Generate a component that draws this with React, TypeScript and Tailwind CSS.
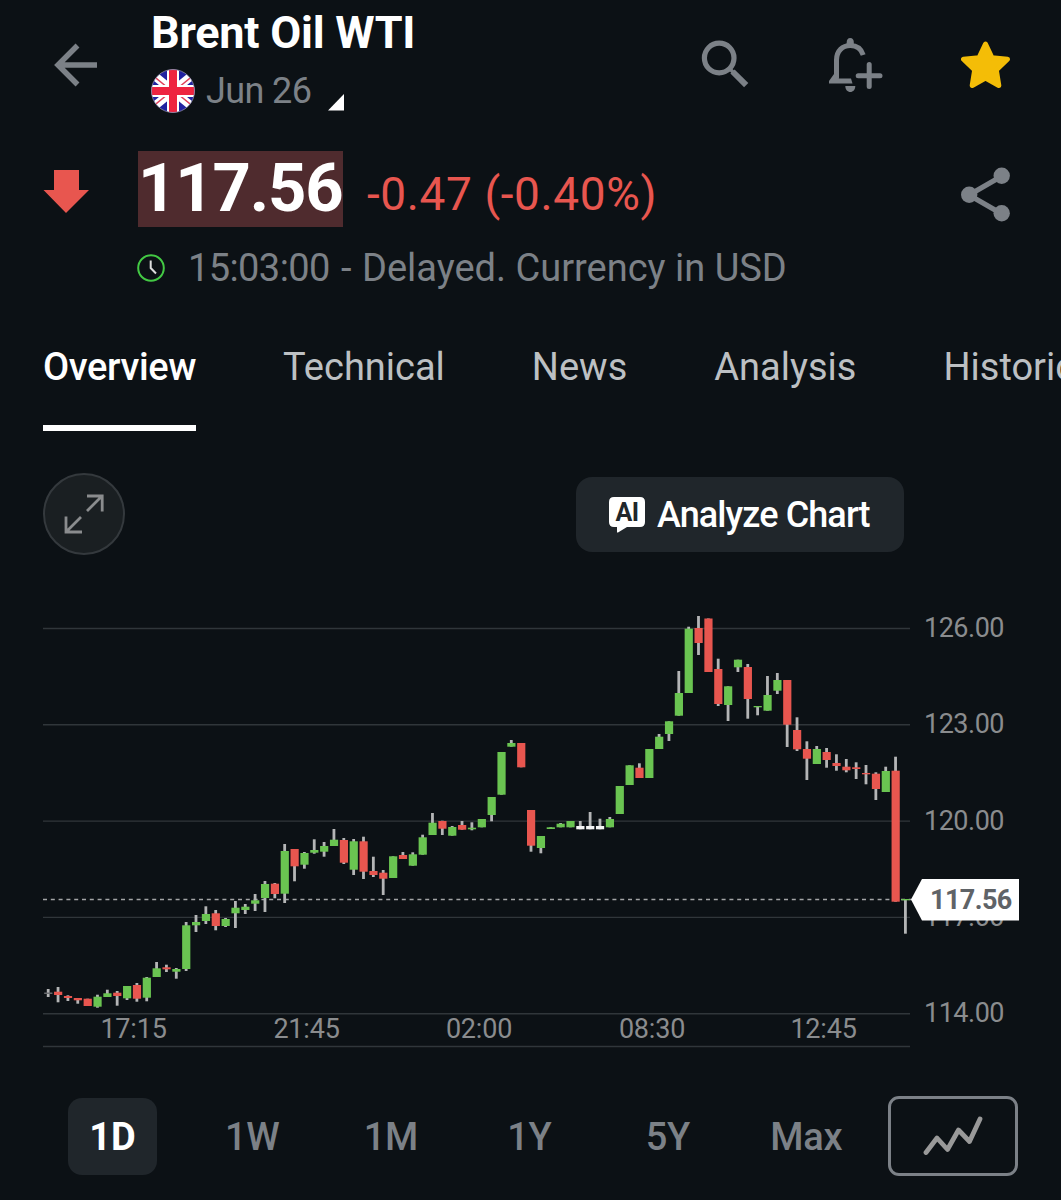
import React from "react";

type Tone = "g" | "r" | "w" | "n";

// [high, bodyTop, bodyBottom, low, tone] in chart units
type Candle = [number, number, number, number, Tone];

const TONES: Record<Tone, string> = {
  g: "#6ac451",
  r: "#e8564f",
  w: "#f4f4f4",
  n: "#6a6d70",
};

const CANDLES: Candle[] = [
  [389, 392.5, 394, 397, "n"],
  [387, 391.7, 395, 402.3, "r"],
  [395.3, 396, 398, 401, "r"],
  [398, 398, 400.3, 403.7, "r"],
  [398.7, 398.7, 406, 406, "r"],
  [394.7, 396.7, 406.7, 407.7, "g"],
  [389.7, 393.3, 397, 397, "g"],
  [391, 392.7, 396, 405.7, "r"],
  [386, 386, 398.3, 400, "g"],
  [383, 385, 398.7, 401.7, "r"],
  [377, 377.7, 397.7, 401.3, "g"],
  [362, 368.3, 377, 377, "g"],
  [364.7, 367.3, 369.3, 372, "r"],
  [368, 369, 371.7, 378.7, "g"],
  [322, 325.3, 369, 371, "g"],
  [315, 322, 325.3, 332, "g"],
  [306.3, 314, 321, 324, "g"],
  [310, 313.3, 326, 330.3, "r"],
  [318, 319, 326, 327, "g"],
  [301, 307.7, 313.3, 328, "g"],
  [304, 306.7, 310, 314, "g"],
  [294, 300.3, 303.7, 311, "g"],
  [281, 284, 298, 312, "g"],
  [283, 283.7, 294, 298.3, "r"],
  [244, 251, 293.7, 303, "g"],
  [249, 249, 266.3, 281.3, "r"],
  [252, 253, 264.7, 268.7, "g"],
  [239.3, 250, 252.7, 253.7, "g"],
  [242, 246, 251.7, 256.7, "g"],
  [229, 239.7, 246, 246, "g"],
  [238, 240, 262.7, 264, "r"],
  [239, 241.3, 269.7, 275, "g"],
  [236.7, 241.3, 271.7, 279, "r"],
  [256.7, 271, 275, 277, "r"],
  [270, 272.7, 278.7, 295, "r"],
  [256.3, 256.3, 278, 278, "g"],
  [252, 255, 259, 259, "r"],
  [252.3, 254.3, 265.7, 265.7, "g"],
  [234.7, 237.3, 254.7, 254.7, "g"],
  [213, 222.7, 235, 235, "g"],
  [220.7, 221, 228.7, 235, "r"],
  [226, 227, 235.7, 235.7, "g"],
  [221, 225, 229.7, 229.7, "r"],
  [222.3, 227.7, 229.3, 230.3, "g"],
  [219, 219, 227.3, 227.3, "g"],
  [197, 197, 215, 221.3, "g"],
  [152, 152, 194.7, 194.7, "g"],
  [140, 143, 146.7, 146.7, "g"],
  [143, 143, 167.3, 167.3, "r"],
  [210, 210, 245.7, 251.7, "r"],
  [236, 236, 248, 253.3, "g"],
  [227.3, 227.3, 229, 229, "g"],
  [223, 223.7, 227.3, 227.3, "g"],
  [221, 221, 227.3, 227.3, "g"],
  [221, 226, 229.3, 229.3, "w"],
  [212, 226, 229.3, 229.3, "w"],
  [218.7, 226, 229.3, 229.3, "w"],
  [217, 219, 227.3, 227.3, "g"],
  [186, 186, 214, 214, "g"],
  [165.3, 165.3, 185, 185, "g"],
  [163.3, 167.7, 178, 178, "r"],
  [149, 149, 178, 178, "g"],
  [134, 136.7, 149, 149, "g"],
  [121.3, 121.3, 134, 141, "g"],
  [71, 93, 115.7, 115.7, "g"],
  [26.7, 28.7, 93, 93, "g"],
  [16, 28, 43, 55, "r"],
  [18.5, 18.5, 72, 72, "r"],
  [58.7, 69, 104, 106, "r"],
  [86.3, 86.3, 105, 121, "g"],
  [59.7, 59.7, 67.3, 72, "g"],
  [64, 67, 99, 118.7, "r"],
  [106, 106, 107.3, 115.3, "g"],
  [76, 95, 110.7, 110.7, "g"],
  [73, 80, 90.7, 94, "g"],
  [80, 80, 124.7, 147, "r"],
  [117.3, 130, 149.3, 151, "r"],
  [141.3, 149, 158.7, 180, "r"],
  [146, 149, 164, 164, "g"],
  [148, 152, 160, 167.7, "r"],
  [154.3, 163, 166, 170.7, "r"],
  [159, 166.7, 170.3, 172.3, "r"],
  [162.3, 167.3, 169, 179, "r"],
  [165, 173, 174.3, 184.3, "r"],
  [172.3, 173.7, 189, 200, "r"],
  [166.7, 171, 192, 192, "g"],
  [156.7, 170.7, 301.7, 301.7, "r"],
  [299, 299, 300.3, 333.7, "g"],
];

const GRID = [
  { y: 28.5, label: "126.00" },
  { y: 124.8, label: "123.00" },
  { y: 221.1, label: "120.00" },
  { y: 317.4, label: "117.00" },
  { y: 413.7, label: "114.00" },
];

const TIMES = [
  { x: 133.5, label: "17:15" },
  { x: 306.5, label: "21:45" },
  { x: 479, label: "02:00" },
  { x: 652, label: "08:30" },
  { x: 823.5, label: "12:45" },
];

const TABS = ["Technical", "News", "Analysis", "Historical"];
const RANGES = ["1W", "1M", "1Y", "5Y", "Max"];

const UkFlag = () => (
  <svg width="44" height="44" viewBox="0 0 44 44">
    <defs>
      <clipPath id="flag">
        <circle cx="22" cy="22" r="21.5" />
      </clipPath>
    </defs>
    <g clipPath="url(#flag)">
      <rect width="44" height="44" fill="#2222a0" />
      <path d="M0 4L44 40M44 4L0 40" stroke="#fff" strokeWidth="8.5" />
      <path d="M0 5L22 23M44 39L22 21M44 5L22 23M0 39L22 21" stroke="#e0405a" strokeWidth="1.6" />
      <path d="M22 0V44M0 22H44" stroke="#fff" strokeWidth="12" />
      <path d="M22 0V44M0 22H44" stroke="#ee2440" strokeWidth="8" />
    </g>
    <circle cx="22" cy="22" r="21.5" fill="none" stroke="#8d8ba8" strokeWidth="0.8" />
  </svg>
);

const Header = () => (
  <header className="flex h-[130px] pl-[53px]">
    <svg className="mt-[43px]" width="45" height="44" viewBox="0 0 45 44" fill="none" stroke="#7c8187" strokeWidth="5.5">
      <path d="M44 22H5M24.5 2.5L5 22L24.5 41.5" />
    </svg>
    <div className="ml-[53px] w-[548px]">
      <h1 className="mt-[7px] text-[45px] font-bold leading-[52px] tracking-[-0.25px] whitespace-nowrap text-white">
        Brent Oil WTI
      </h1>
      <div className="mt-[10px] flex h-[44px]">
        <UkFlag />
        <span className="ml-[11px] w-[106px] text-[36px] leading-[45px] tracking-[-0.6px] whitespace-nowrap text-[#7c8187]">
          Jun 26
        </span>
        <svg className="mt-[25px] ml-[16px]" width="17" height="17" viewBox="0 0 17 17">
          <path d="M16 0V16.5H0Z" fill="#fff" />
        </svg>
      </div>
    </div>
    <svg className="mt-[38px]" width="52" height="52" viewBox="0 0 52 52" fill="none" stroke="#7c8187">
      <circle cx="20.2" cy="20" r="14.8" strokeWidth="5.2" />
      <path d="M31 31L34.5 34.5" strokeWidth="3.6" />
      <path d="M33.5 33.5L47.2 47.2" strokeWidth="6" />
    </svg>
    <svg className="mt-[36px] ml-[77px]" width="56" height="58" viewBox="0 0 56 58" fill="none" stroke="#7c8187">
      <path d="M22.2 2C24.6 2 25.8 3.8 25.8 6V8.5H18.7V6C18.7 3.8 19.9 2 22.2 2Z" fill="#7c8187" stroke="none" />
      <path d="M8.5 42.5V24C8.5 15 14.5 9.5 22.3 9.5C29 9.5 33.5 13.5 35.2 19" strokeWidth="5" />
      <path d="M6 38L11 42.5H23L24.5 47.5H1V45Z" fill="#7c8187" stroke="none" />
      <path d="M17.3 50H27.3C27.3 53.8 25 56 22.3 56S17.3 53.8 17.3 50Z" fill="#7c8187" stroke="none" />
      <path d="M41.2 28.5V50.5M30.2 39.7H52" strokeWidth="5" strokeLinecap="round" />
    </svg>
    <svg className="mt-[40px] ml-[77px]" width="50" height="50" viewBox="0 0 50 50">
      <path
        d="M24.5 4L31 17.8L46.5 19.2L35.3 30L37.8 45.5L24.5 38L11.2 45.5L13.7 30L2.5 19.2L18 17.8Z"
        fill="#f4bd07"
        stroke="#f4bd07"
        strokeWidth="5"
        strokeLinejoin="round"
      />
    </svg>
  </header>
);

const Quote = () => (
  <section className="h-[170px] pl-[43px] pt-[21px]">
    <div className="flex h-[76px]">
      <svg className="mt-[19px]" width="46" height="43" viewBox="0 0 46 43">
        <path d="M11 0H36V20H46L23 43L0.5 20H11Z" fill="#e8564f" />
      </svg>
      <div className="ml-[49px] w-[205px] bg-[#4f2b2e] text-[67px] font-bold leading-[75px] tracking-[-1.2px] whitespace-nowrap text-white">
        117.56
      </div>
      <span className="mt-[1px] ml-[24px] w-[593px] text-[46px] leading-[84px] tracking-[0.6px] whitespace-nowrap text-[#e8564f]">
        -0.47 (-0.40%)
      </span>
      <svg className="mt-[15px]" width="52" height="56" viewBox="0 0 52 56" fill="#7c8187">
        <path d="M42 10L9 29L42 48" fill="none" stroke="#7c8187" strokeWidth="5.2" />
        <circle cx="41.7" cy="9.7" r="8.2" />
        <circle cx="9.2" cy="28.7" r="8.2" />
        <circle cx="41.7" cy="47.3" r="8.2" />
      </svg>
    </div>
    <div className="mt-[18px] ml-[94px] flex h-[46px] items-center">
      <svg width="28" height="28" viewBox="0 0 28 28" fill="none">
        <circle cx="14" cy="14" r="12.8" stroke="#43c944" strokeWidth="2" />
        <path d="M13.7 6.5V14L19 19.5" stroke="#ddd" strokeWidth="2" />
      </svg>
      <p className="ml-[23px] flex text-[38px] whitespace-nowrap text-[#7c8187]">
        <span className="w-[153px] tracking-[-0.6px]">15:03:00</span>
        <span className="w-[21px]">-</span>
        <span>Delayed. Currency in USD</span>
      </p>
    </div>
  </section>
);

const Tabs = () => (
  <nav className="ml-[43px] mt-[35px] flex h-[96px] gap-[87px] text-[38px] leading-[64px] whitespace-nowrap">
    <span className="w-[153px] shrink-0 border-b-[6px] border-white font-medium tracking-[-0.35px] text-white">Overview</span>
    {TABS.map((tab) => (
      <span key={tab} className="text-[#bdc0c3]">
        {tab}
      </span>
    ))}
  </nav>
);

const ChartToolbar = () => (
  <div className="mt-[42px] ml-[43px] flex h-[82px] w-[861px] items-center justify-between">
    <div className="flex h-[82px] w-[82px] items-center justify-center rounded-full border-2 border-[#34393d] bg-[#1a1f22]">
      <svg width="42" height="42" viewBox="0 0 42 42" fill="none" stroke="#8a8c8e" strokeWidth="2.8">
        <path d="M24 18L39 3M24 3H39.2V18.5M18 24L3 39M3 23.5V39H19" />
      </svg>
    </div>
    <button className="mt-px flex h-[75px] w-[328px] items-center rounded-[16px] bg-[#20262b] pl-[33px]">
      <div className="relative h-[36px] w-[36px]">
        <svg width="36" height="36" viewBox="0 0 36 36">
          <path d="M5 0H31Q36 0 36 5V25Q36 30 31 30H18L9 35.5Q8 36 8 34.5V30H5Q0 30 0 25V5Q0 0 5 0Z" fill="#fff" />
        </svg>
        <span className="absolute inset-x-0 top-0 text-center text-[25px] font-bold leading-[31px] tracking-[-0.5px] text-[#20262b]">
          AI
        </span>
      </div>
      <span className="ml-[12px] text-[36px] font-medium tracking-[-0.9px] whitespace-nowrap text-white">Analyze Chart</span>
    </button>
  </div>
);

const CandleChart = () => (
  <svg className="mt-[45px] block" width="1061" height="460" viewBox="0 0 1061 460" fontFamily="Roboto">
    {GRID.map(({ y, label }) => (
      <g key={label}>
        <path d={`M43 ${y}H910`} stroke="#30363a" strokeWidth="1.4" />
        <text x="924" y={y + 8.5} fontSize="27" letterSpacing="-0.5" fill="#8a8c8e">
          {label}
        </text>
      </g>
    ))}
    <path d="M43 446.5H910" stroke="#30363a" strokeWidth="1.4" />
    {TIMES.map(({ x, label }) => (
      <text key={label} x={x} y="438" fontSize="27" letterSpacing="-0.2" textAnchor="middle" fill="#8a8c8e">
        {label}
      </text>
    ))}
    <path d="M43 299.5H912" stroke="#a3a5a6" strokeWidth="1.3" strokeDasharray="4 3.8" />
    {CANDLES.map(([high, top, bottom, low, tone], i) => {
      const x = 48.2 + i * 9.853;
      return (
        <g key={i}>
          <rect x={x - 1.4} y={high} width="2.8" height={low - high} fill="#b4b5b6" />
          <rect x={x - 4} y={top} width="8.2" height={bottom - top} fill={TONES[tone]} />
        </g>
      );
    })}
    <path d="M911 299.5L922 279H1019V320.5H922Z" fill="#fff" />
    <text x="930" y="309" fontSize="27" fontWeight="700" letterSpacing="-0.6" fill="#5f6367">
      117.56
    </text>
  </svg>
);

const RangeBar = () => (
  <div className="mt-[36px] flex h-[80px] items-center pl-[68px] text-[38px] font-medium text-[#7c8187]">
    <span className="flex h-[77px] w-[89px] items-center justify-center rounded-[14px] bg-[#20262b] pt-[2px] font-bold text-white">
      1D
    </span>
    <div className="ml-[26px] flex pt-[2px]">
      {RANGES.map((range) => (
        <span key={range} className="w-[138.5px] text-center tracking-[-0.3px]">
          {range}
        </span>
      ))}
    </div>
    <div className="ml-[12px] flex h-[80px] w-[130px] items-center justify-center rounded-[11px] border-3 border-[#7c8187]">
      <svg width="60" height="40" viewBox="0 0 60 40" fill="none">
        <path d="M3 36.5L14 22L24.5 33.5L35.5 14L46.5 25.5L57 3" stroke="#999" strokeWidth="4.8" strokeLinecap="round" strokeLinejoin="round" />
      </svg>
    </div>
  </div>
);

const App: React.FC = () => {
  return (
    <main className="h-[1200px] w-[1061px] overflow-hidden bg-[#0c1115] font-['Roboto',sans-serif]">
      <Header />
      <Quote />
      <Tabs />
      <ChartToolbar />
      <CandleChart />
      <RangeBar />
    </main>
  );
};

export default App;
